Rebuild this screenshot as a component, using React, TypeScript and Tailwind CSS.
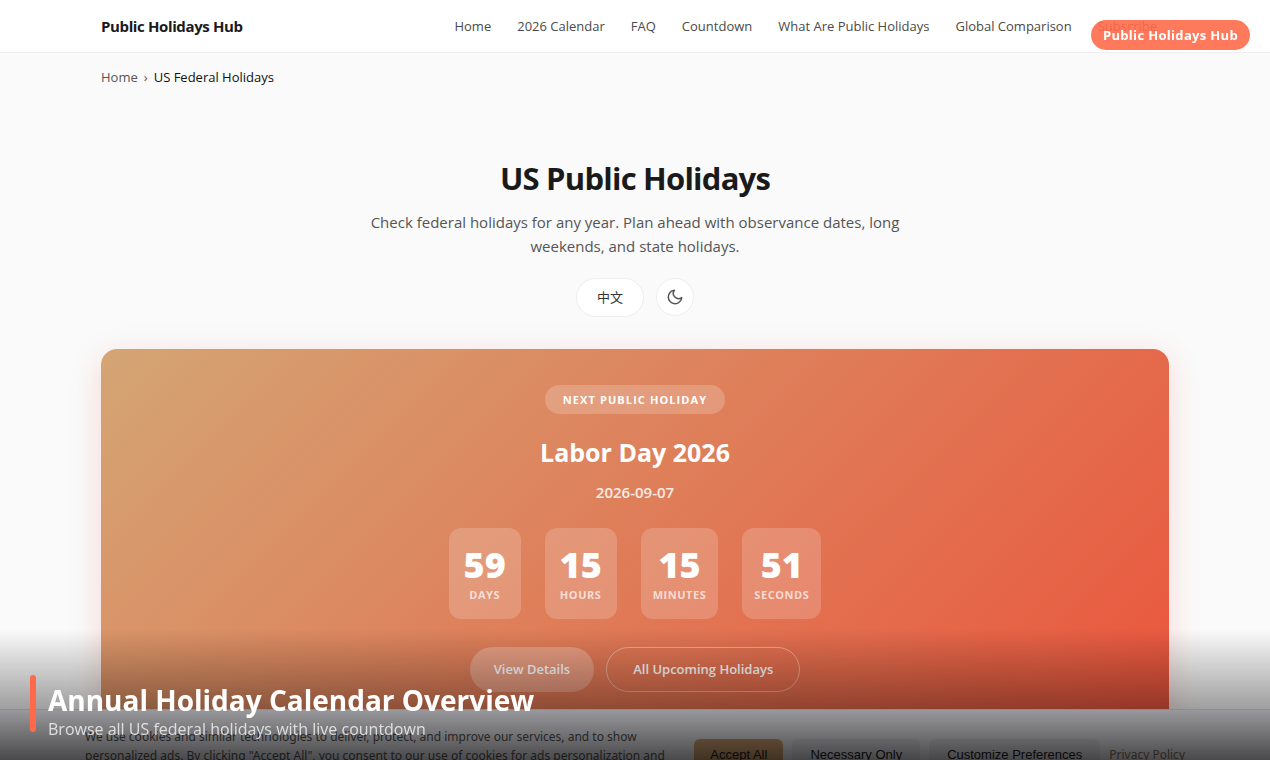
import React from 'react';

const navLinks = [
  'Home',
  '2026 Calendar',
  'FAQ',
  'Countdown',
  'What Are Public Holidays',
  'Global Comparison',
  'Subscribe',
];

const countdown = [
  { value: '59', label: 'Days' },
  { value: '15', label: 'Hours' },
  { value: '15', label: 'Minutes' },
  { value: '51', label: 'Seconds' },
];

const Header = () => (
  <header className="border-b border-[#eeeeee] bg-white">
    <div className="mx-auto flex h-[52px] max-w-[1100px] items-center justify-between px-4">
      <a href="#" className="text-[15px] font-bold tracking-tight text-[#1a1a1a]">Public Holidays Hub</a>
      <nav className="flex gap-[26px] pt-0.5 pr-3 text-[13px] font-medium text-[#4a4a4a]">
        {navLinks.map((link) => (
          <a key={link} href="#" className="whitespace-nowrap">{link}</a>
        ))}
      </nav>
    </div>
  </header>
);

const Breadcrumb = () => (
  <nav aria-label="Breadcrumb" className="flex h-[50px] items-center gap-1.5 text-[13px] text-[#555555]">
    <a href="#">Home</a>
    <span>›</span>
    <span className="font-medium text-[#111111]">US Federal Holidays</span>
  </nav>
);

const Intro = () => (
  <section className="flex flex-col items-center pt-[53px] text-center">
    <h1 className="text-[31px] leading-[44px] font-bold tracking-tight text-[#1a1a1a]">US Public Holidays</h1>
    <p className="mt-2.5 max-w-[560px] text-[15px] leading-6 text-[#555555]">
      Check federal holidays for any year. Plan ahead with observance dates, long weekends, and state holidays.
    </p>
    <div className="mt-5 flex items-start gap-3">
      <button className="h-[39px] rounded-full border border-[#eeeeee] bg-white px-5 text-[13px] text-[#333333]">
        中文
      </button>
      <button
        aria-label="Dark mode"
        className="flex size-[38px] items-center justify-center rounded-full border border-[#eeeeee] bg-white text-[#555555]"
      >
        <svg width="18" height="18" viewBox="0 0 24 24" fill="none" stroke="currentColor" strokeWidth="2" strokeLinecap="round" strokeLinejoin="round">
          <path d="M21 12.79A9 9 0 1 1 11.21 3 7 7 0 0 0 21 12.79z" />
        </svg>
      </button>
    </div>
  </section>
);

const NextHoliday = () => (
  <section className="mt-8 flex flex-col items-center rounded-2xl bg-[linear-gradient(135deg,#d4a574_0%,#ea553d_100%)] px-8 py-9 text-white shadow-[0_8px_32px_rgba(232,85,60,0.2)]">
    <span className="rounded-full bg-white/20 px-[18px] py-1.5 text-[11px] leading-[17px] font-bold tracking-widest uppercase">
      Next Public Holiday
    </span>
    <h2 className="mt-5 text-[25px] leading-9 font-bold">Labor Day 2026</h2>
    <p className="mt-3 text-[15px] leading-5 font-semibold text-white/85">2026-09-07</p>
    <div className="mt-[26px] flex gap-6">
      {countdown.map((item) => (
        <div
          key={item.label}
          className="flex min-w-[72px] flex-col items-center rounded-xl bg-white/18 px-3 py-4"
        >
          <span className="text-[36px] leading-[42px] font-extrabold">{item.value}</span>
          <span className="text-[11px] leading-[17px] font-bold tracking-wider text-white/70 uppercase">{item.label}</span>
        </div>
      ))}
    </div>
    <div className="mt-7 flex gap-3 text-[13px] font-semibold">
      <a href="#" className="flex h-[45px] items-center rounded-full bg-white/25 px-6">View Details</a>
      <a href="#" className="flex h-[45px] items-center rounded-full border border-white/40 px-[26px]">All Upcoming Holidays</a>
    </div>
  </section>
);

const CookieBar = () => (
  <div className="fixed inset-x-0 bottom-0 h-[51px] overflow-hidden border-t border-[#e5e0da] bg-[#f4f4fa]">
    <div className="mx-auto flex max-w-[1100px] items-start justify-between gap-4">
      <p className="flex-1 pt-[17px] font-['Noto_Sans',sans-serif] text-[12px] leading-[19px] text-[#555555]">
        We use cookies and similar technologies to deliver, protect, and improve our services, and to show personalized
        ads. By clicking "Accept All", you consent to our use of cookies for ads personalization and measurement.
      </p>
      <div className="flex items-center gap-[9px] pt-[29px] font-['Liberation_Sans',sans-serif] text-[13px] text-[#1a1a1a]">
        <button className="h-8 rounded-md bg-[#d4a574] px-4">Accept All</button>
        <button className="h-8 rounded-md bg-[#e8e8ee] px-[18px]">Necessary Only</button>
        <button className="h-8 rounded-md bg-[#e8e8ee] px-[18px]">Customize Preferences</button>
        <a href="#" className="font-['Noto_Sans',sans-serif] text-[12px] text-[#8a7355]">Privacy Policy</a>
      </div>
    </div>
  </div>
);

const Caption = () => (
  <div className="fixed inset-x-0 bottom-0 flex h-[130px] items-end gap-3 bg-linear-to-b from-transparent via-black/36 via-60% to-black/70 px-[30px] pb-5">
    <span className="mb-2 h-[57px] w-1.5 rounded-full bg-[#ff6b4a]" />
    <div>
      <p className="text-[28px] leading-9 font-bold text-white">Annual Holiday Calendar Overview</p>
      <p className="text-[16px] leading-[22px] text-white/75">Browse all US federal holidays with live countdown</p>
    </div>
  </div>
);

const App: React.FC = () => {
  return (
    <div className="h-screen overflow-hidden bg-[#fafafa] font-['Open_Sans','Noto_Sans_CJK_SC',sans-serif]">
      <Header />
      <main className="mx-auto max-w-[1100px] px-4">
        <Breadcrumb />
        <Intro />
        <NextHoliday />
      </main>
      <CookieBar />
      <Caption />
      <div className="fixed top-5 right-5 flex h-[30px] items-center rounded-full bg-[#ff6b4a]/90 px-3 pt-0.5 text-[13px] font-bold tracking-wide text-white">
        Public Holidays Hub
      </div>
    </div>
  );
};

export default App;
